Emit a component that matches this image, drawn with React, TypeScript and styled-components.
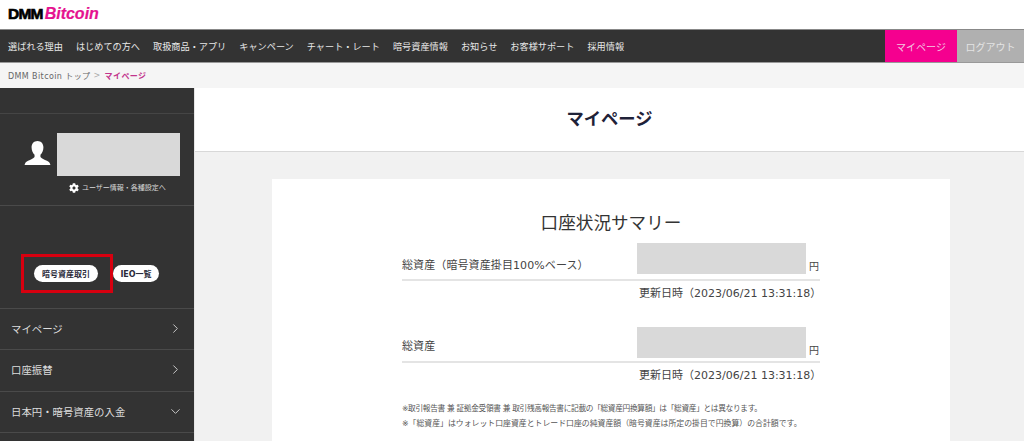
import React from "react";
import styled, { createGlobalStyle } from "styled-components";
import { FaCog } from "react-icons/fa";
import { ChevronRight, ChevronDown } from "lucide-react";

const GlobalStyle = createGlobalStyle`
  html, body {
    margin: 0;
    padding: 0;
    height: 441px;
    overflow: hidden;
    background: #f1f1f1;
    font-family: "DejaVu Sans", "Noto Sans CJK JP", sans-serif;
  }
  * { box-sizing: border-box; }
`;

const Page = styled.div`
  width: 1024px;
  height: 441px;
  overflow: hidden;
  display: flex;
  flex-direction: column;
`;

const Header = styled.header`
  height: 29px;
  flex: none;
  background: #fff;
  padding: 5px 0 0 8px;
  display: flex;
  align-items: flex-start;
`;

const LogoDmm = styled.span`
  font-family: "Liberation Sans", sans-serif;
  font-weight: 700;
  font-size: 15.5px;
  line-height: 18px;
  letter-spacing: -0.8px;
  color: #000;
  -webkit-text-stroke: 0.7px #000;
`;

const LogoBitcoin = styled.span`
  font-family: "Liberation Sans", sans-serif;
  font-weight: 700;
  font-style: italic;
  font-size: 16px;
  line-height: 18px;
  margin-left: 2px;
  color: #e5128f;
  -webkit-text-stroke: 0.2px #e5128f;
`;

const Nav = styled.nav`
  height: 34px;
  flex: none;
  background: #333;
  border-top: 1px solid #888;
  border-bottom: 1px solid #999;
  display: flex;
  align-items: stretch;
  padding-left: 8px;
`;

const NavList = styled.div`
  flex: 1;
  display: flex;
  align-items: center;
  gap: 13px;
`;

const NavItem = styled.span`
  font-size: 9.17px;
  color: #e8e8e8;
  white-space: nowrap;
`;

const NavButton = styled.div<{ $bg: string; $color: string; $width: number }>`
  width: ${(p) => p.$width}px;
  background: ${(p) => p.$bg};
  color: ${(p) => p.$color};
  font-size: 10px;
  display: flex;
  align-items: center;
  justify-content: center;
`;

const Breadcrumb = styled.div`
  height: 25px;
  flex: none;
  background: #f5f5f5;
  padding-left: 8px;
  display: flex;
  align-items: center;
  font-size: 8px;
  color: #666;
  letter-spacing: 0.4px;
`;

const Crumbsep = styled.span`
  margin: 0 4px 0 3px;
  color: #aaa;
  font-size: 8px;
`;

const CrumbCurrent = styled.span`
  color: #c2348c;
  font-weight: 700;
`;

const Body = styled.div`
  flex: 1;
  min-height: 0;
  display: flex;
`;

const Sidebar = styled.aside`
  width: 194px;
  flex: none;
  background: #333;
  color: #ddd;
  display: flex;
  flex-direction: column;
  overflow: hidden;
`;

const SideTop = styled.div`
  height: 26px;
  flex: none;
  border-bottom: 1px solid #454545;
`;

const Profile = styled.div`
  height: 92px;
  flex: none;
  border-bottom: 1px solid #4a4a4a;
  padding: 19px 0 0 24px;
`;

const ProfileRow = styled.div`
  display: flex;
  align-items: center;
  gap: 6px;
`;

const AvatarIcon = styled.svg`
  width: 27px;
  height: 24px;
  flex: none;
  margin-bottom: 3px;
  fill: #fff;
`;

const GrayBlock = styled.div<{ $w: number; $h: number }>`
  width: ${(p) => p.$w}px;
  height: ${(p) => p.$h}px;
  background: #d9d9d9;
  flex: none;
`;

const SettingsLink = styled.div`
  display: flex;
  align-items: center;
  gap: 3px;
  margin: 6px 0 0 45px;
  font-size: 7px;
  line-height: 12px;
  color: #d8d8d8;
  white-space: nowrap;
`;

const Trade = styled.div`
  height: 103px;
  flex: none;
  padding: 48px 0 0 21px;
  border-bottom: 1px solid #4a4a4a;
  display: flex;
  align-items: flex-start;
`;

const Highlight = styled.div`
  width: 92px;
  height: 39px;
  border: 3px solid #d7000f;
  padding-left: 10px;
  display: flex;
  align-items: center;
`;

const Pill = styled.span<{ $w: number }>`
  width: ${(p) => p.$w}px;
  height: 17px;
  border-radius: 9px;
  background: #fff;
  color: #2b2b3a;
  font-size: 8px;
  font-weight: 700;
  display: flex;
  align-items: center;
  justify-content: center;
  white-space: nowrap;
`;

const PlainPill = styled.div`
  margin-top: 11px;
`;

const MenuRow = styled.div`
  height: 41.3px;
  flex: none;
  padding: 0 11px 1px 11px;
  border-bottom: 1px solid #4a4a4a;
  display: flex;
  align-items: center;
  justify-content: space-between;
  font-size: 10.4px;
  color: #ddd;
`;

const Main = styled.main`
  flex: 1;
  min-width: 0;
  display: flex;
  flex-direction: column;
  border-left: 1px solid #e6e6e6;
  background: #f1f1f1;
`;

const TitleBand = styled.div`
  height: 64px;
  flex: none;
  background: #fff;
  border-bottom: 1px solid #d8d8d8;
  display: flex;
  align-items: center;
  justify-content: center;
  padding-bottom: 5px;
  font-size: 17.3px;
  font-weight: 700;
  color: #1f2238;
`;

const Card = styled.section`
  width: 678px;
  margin: 27px 0 0 77px;
  background: #fff;
  padding: 31px 130px 0 130px;
  flex: 1;
`;

const CardTitle = styled.h2`
  margin: 0;
  font-size: 17.6px;
  line-height: 26px;
  font-weight: 400;
  color: #333;
  text-align: center;
`;

const AssetRow = styled.div<{ $gap: number }>`
  margin-top: 8px;
  height: ${(p) => 32 + p.$gap}px;
  display: flex;
  align-items: flex-end;
  border-bottom: 2px solid #e4e4e4;
  padding-bottom: ${(p) => p.$gap}px;
  font-size: 11px;
  color: #444;
`;

const AssetLabel = styled.span<{ $lift: number }>`
  width: 235px;
  flex: none;
  line-height: 14px;
  letter-spacing: 0.1px;
  padding-bottom: ${(p) => p.$lift}px;
`;

const Yen = styled.span`
  font-size: 10px;
  line-height: 14px;
  margin-left: 3px;
`;

const UpdatedAt = styled.div`
  margin-top: 6px;
  padding-left: 237px;
  font-size: 11px;
  line-height: 14px;
  color: #444;
  white-space: nowrap;
`;

const SecondRow = styled.div`
  margin-top: 27px;
`;

const Notes = styled.div`
  margin-top: 18px;
`;

const NoteLine = styled.p<{ $size: number; $spacing: number }>`
  margin: 0;
  font-size: ${(p) => p.$size}px;
  letter-spacing: ${(p) => p.$spacing}px;
  line-height: 15px;
  color: #555;
  white-space: nowrap;
`;

const navItems = [
  "選ばれる理由",
  "はじめての方へ",
  "取扱商品・アプリ",
  "キャンペーン",
  "チャート・レート",
  "暗号資産情報",
  "お知らせ",
  "お客様サポート",
  "採用情報",
];

const AssetBlock: React.FC<{ label: string; lift: number; gap: number }> = ({ label, lift, gap }) => (
  <>
    <AssetRow $gap={gap}>
      <AssetLabel $lift={lift}>{label}</AssetLabel>
      <GrayBlock $w={169} $h={31} />
      <Yen>円</Yen>
    </AssetRow>
    <UpdatedAt>更新日時（2023/06/21 13:31:18）</UpdatedAt>
  </>
);

const App: React.FC = () => (
  <Page>
    <GlobalStyle />
    <Header>
      <LogoDmm>DMM</LogoDmm>
      <LogoBitcoin>Bitcoin</LogoBitcoin>
    </Header>
    <Nav>
      <NavList>
        {navItems.map((item) => (
          <NavItem key={item}>{item}</NavItem>
        ))}
      </NavList>
      <NavButton $bg="#f5008f" $color="#f4c6e0" $width={72}>
        マイページ
      </NavButton>
      <NavButton $bg="#b0b0b0" $color="#e4e4e4" $width={67}>
        ログアウト
      </NavButton>
    </Nav>
    <Breadcrumb>
      DMM Bitcoin トップ<Crumbsep>&gt;</Crumbsep>
      <CrumbCurrent>マイページ</CrumbCurrent>
    </Breadcrumb>
    <Body>
      <Sidebar>
        <SideTop />
        <Profile>
          <ProfileRow>
            <AvatarIcon viewBox="0 0 28 26">
              <path d="M14 0c4 0 6.400 3 6.400 7 0 3.400-1.500 6.400-3.200 8v2.300c1 1.600 4.400 3 7 4.200 2 .9 3.300 2.200 3.800 4.500H0c.5-2.300 1.800-3.600 3.800-4.500 2.600-1.200 6-2.600 7-4.200V15c-1.700-1.600-3.200-4.600-3.200-8 0-4 2.400-7 6.400-7z" />
            </AvatarIcon>
            <GrayBlock $w={123} $h={43} />
          </ProfileRow>
          <SettingsLink>
            <FaCog size={10} color="#fff" />
            ユーザー情報・各種設定へ
          </SettingsLink>
        </Profile>
        <Trade>
          <Highlight>
            <Pill $w={64}>暗号資産取引</Pill>
          </Highlight>
          <PlainPill>
            <Pill $w={46}>IEO一覧</Pill>
          </PlainPill>
        </Trade>
        <MenuRow>
          マイページ
          <ChevronRight size={15} color="#c8c8c8" strokeWidth={1.6} />
        </MenuRow>
        <MenuRow>
          口座振替
          <ChevronRight size={15} color="#c8c8c8" strokeWidth={1.6} />
        </MenuRow>
        <MenuRow>
          日本円・暗号資産の入金
          <ChevronDown size={15} color="#c8c8c8" strokeWidth={1.6} />
        </MenuRow>
      </Sidebar>
      <Main>
        <TitleBand>マイページ</TitleBand>
        <Card>
          <CardTitle>口座状況サマリー</CardTitle>
          <AssetBlock label="総資産（暗号資産掛目100%ベース）" lift={1} gap={5} />
          <SecondRow>
            <AssetBlock label="総資産" lift={4} gap={3} />
          </SecondRow>
          <Notes>
            <NoteLine $size={7.7} $spacing={-0.33}>
              ※取引報告書 兼 証拠金受領書 兼 取引残高報告書に記載の「総資産円換算額」は「総資産」とは異なります。
            </NoteLine>
            <NoteLine $size={7.88} $spacing={0}>
              ※「総資産」はウォレット口座資産とトレード口座の純資産額（暗号資産は所定の掛目で円換算）の合計額です。
            </NoteLine>
          </Notes>
        </Card>
      </Main>
    </Body>
  </Page>
);

export default App;
